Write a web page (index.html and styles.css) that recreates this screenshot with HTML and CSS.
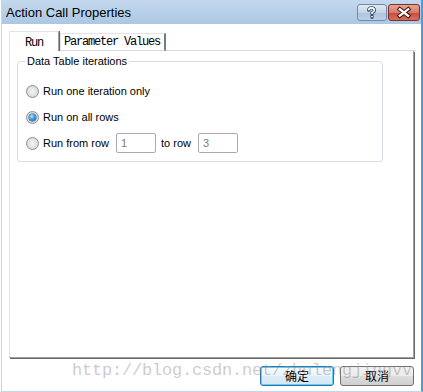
FILE: index.html
```html
<!DOCTYPE html>
<html>
<head>
<meta charset="utf-8">
<title>Action Call Properties</title>
<link rel="stylesheet" href="styles.css">
</head>
<body>
<div class="window">
  <div class="titlebar">
    <span class="title">Action Call Properties</span>
    <div class="caption-btns">
      <div class="cap help">
        <svg width="30" height="17" viewBox="0 0 30 17">
          <path d="M11.5 6 Q11.5 3.5 14.5 3.5 Q17.5 3.5 17.5 6 Q17.5 7.6 15 8.6 L15 10.2 M15 12.2 L15 13.6" fill="none" stroke="#3b4d66" stroke-width="3.6" stroke-linecap="round" stroke-linejoin="round"/>
          <path d="M11.5 6 Q11.5 3.5 14.5 3.5 Q17.5 3.5 17.5 6 Q17.5 7.6 15 8.6 L15 10.2 M15 12.2 L15 13.6" fill="none" stroke="#ffffff" stroke-width="1.7" stroke-linecap="butt" stroke-linejoin="round"/>
        </svg>
      </div>
      <div class="cap close">
        <svg width="32" height="17" viewBox="0 0 32 17">
          <path d="M11.5 5 L20.5 12 M20.5 5 L11.5 12" fill="none" stroke="#4a1a12" stroke-width="4.6" stroke-linecap="square"/>
          <path d="M11.5 5 L20.5 12 M20.5 5 L11.5 12" fill="none" stroke="#ffffff" stroke-width="2.4" stroke-linecap="square"/>
        </svg>
      </div>
    </div>
  </div>
  <div class="client">
    <div class="tabs">
      <div class="tab active">Run</div>
      <div class="tab">Parameter Values</div>
      <div class="tab-fill"></div>
    </div>
    <div class="panel">
      <fieldset class="group">
        <legend>Data Table iterations</legend>
        <div class="row"><span class="radio"></span><span class="label">Run one iteration only</span></div>
        <div class="row"><span class="radio checked"></span><span class="label">Run on all rows</span></div>
        <div class="row">
          <span class="radio"></span><span class="label from">Run from row</span>
          <span class="field">1</span>
          <span class="label to">to row</span>
          <span class="field">3</span>
        </div>
      </fieldset>
    </div>
    <div class="actions">
      <div class="btn default">确定</div>
      <div class="btn">取消</div>
    </div>
  </div>
  <div class="watermark">http://blog.csdn.net/zhulengjingvv</div>
</div>
</body>
</html>
```
FILE: styles.css
```css
html, body {
  margin: 0;
  padding: 0;
  background: #ffffff;
}
body {
  width: 423px;
  height: 392px;
  overflow: hidden;
  font-family: "Liberation Sans", Arial, sans-serif;
}
.window {
  position: relative;
  margin-left: 1px;
  width: 419px;
  height: 391px;
  border-left: 1px solid #c3d6ea;
  border-bottom: 1px solid #c3d6ea;
  border-right: 2px solid #4a9be0;
  background: #ffffff;
}
.titlebar {
  height: 24px;
  display: flex;
  align-items: flex-start;
  background: linear-gradient(#c4d8ee, #acc7e4);
  padding-left: 4px;
  padding-right: 1px;
}
.title {
  font-size: 13px;
  line-height: 24px;
  color: #000;
  padding-top: 1px;
}
.caption-btns {
  margin-left: auto;
  margin-top: 4px;
  display: flex;
  gap: 1px;
}
.cap {
  height: 17px;
  box-sizing: border-box;
  border-radius: 3px;
  display: flex;
  align-items: center;
  justify-content: center;
}
.cap svg { display: block; }
.help {
  width: 30px;
  border: 1px solid #6f8aab;
  background: linear-gradient(#dfe9f4, #c3d4e7 50%, #aec4dd 51%, #bdd0e6);
}
.close {
  width: 32px;
  border: 1px solid #7e3026;
  background: linear-gradient(#e8a597, #d9776a 50%, #c64a3b 51%, #d5705f);
}
.client {
  padding: 7px 6px 0 7px;
}
.tabs {
  display: flex;
  align-items: flex-end;
  height: 20px;
}
.tab {
  font-family: "Liberation Mono", "Courier New", monospace;
  font-size: 12px;
  letter-spacing: -1.2px;
  color: #000;
  box-sizing: border-box;
  background: #fff;
}
.tab.active {
  width: 50px;
  height: 20px;
  border-left: 1px solid #e3e3e3;
  border-top: 1px solid #e3e3e3;
  border-right: 1px solid #a0a0a0;
  box-shadow: 1px 0 0 #696969;
  line-height: 20px;
  text-align: center;
  padding-top: 1px;
  position: relative;
  z-index: 1;
}
.tab:not(.active) {
  margin-left: 1px;
  width: 106px;
  height: 18px;
  border-left: 1px solid #e3e3e3;
  border-top: 1px solid #e3e3e3;
  border-right: 2px solid #7a7a7a;
  border-bottom: 1px solid #dadada;
  padding-left: 3px;
  line-height: 17px;
}
.tab-fill {
  flex: 1;
  height: 0;
  border-bottom: 1px solid #dadada;
  margin-right: -1px;
}
.panel {
  box-sizing: border-box;
  width: 405px;
  height: 307px;
  border-left: 1px solid #e3e3e3;
  border-right: 1px solid #a0a0a0;
  border-bottom: 1px solid #a0a0a0;
  box-shadow: 1px 1px 0 #696969;
  padding: 4px 0 0 7px;
}
.group {
  margin: 0;
  width: 366px;
  box-sizing: border-box;
  border: 1px solid #d5dfe5;
  border-radius: 3px;
  padding: 10px 0 5px 8px;
  min-inline-size: 0;
}
.group legend {
  font-size: 11px;
  line-height: 13px;
  padding: 0 2px;
  margin-left: -1px;
  color: #000;
}
.row {
  display: flex;
  align-items: center;
  height: 26px;
  font-size: 11px;
  color: #000;
}
.radio {
  width: 13px;
  height: 13px;
  box-sizing: border-box;
  border-radius: 50%;
  border: 1px solid #8e8f8f;
  background: radial-gradient(circle at 50% 50%, #f4f4f4 0%, #e2e2e2 55%, #c8c8c8 100%);
  display: flex;
  align-items: center;
  justify-content: center;
  flex-shrink: 0;
}
.radio.checked::after {
  content: "";
  width: 7px;
  height: 7px;
  border-radius: 50%;
  background: radial-gradient(circle at 40% 35%, #b8e6ff 0%, #3a9be0 45%, #0d5aa7 100%);
  box-shadow: 0 0 0 0.5px #1b4f86;
}
.label {
  margin-left: 4px;
  white-space: nowrap;
}
.label.from {
  width: 73px;
}
.label.to {
  margin-left: 5px;
  width: 37px;
}
.field {
  width: 40px;
  height: 20px;
  box-sizing: border-box;
  border: 1px solid #a7abb0;
  border-radius: 2px;
  color: #7c7c7c;
  font-size: 11px;
  line-height: 18px;
  padding-left: 4px;
}
.actions {
  display: flex;
  justify-content: flex-end;
  gap: 6px;
  padding-top: 8px;
  padding-right: 1px;
}
.btn {
  width: 74px;
  height: 20px;
  box-sizing: border-box;
  border: 1px solid #707070;
  border-radius: 3px;
  background: linear-gradient(#f2f2f2, #ebebeb 50%, #dddddd 51%, #cfcfcf);
  font-family: "Noto Sans CJK SC", sans-serif;
  font-size: 12px;
  line-height: 18px;
  text-align: center;
  color: #000;
}
.btn.default {
  border-color: #2f74a8;
  box-shadow: inset 0 0 0 1px #5fd0fa;
  background: linear-gradient(#f6fbfe, #eaf4fb 50%, #dcedf8 51%, #d2e8f6);
}
.watermark {
  position: absolute;
  left: 70px;
  top: 362px;
  font-family: "Liberation Mono", "Courier New", monospace;
  font-size: 17px;
  letter-spacing: -0.2px;
  line-height: 18px;
  color: rgba(140, 140, 140, 0.45);
  white-space: nowrap;
  pointer-events: none;
}
```
